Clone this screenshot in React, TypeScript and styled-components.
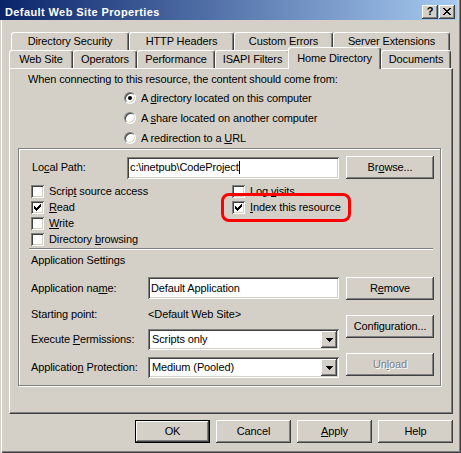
import styled, { createGlobalStyle, css } from "styled-components";

// ==================== Global ====================

const GlobalStyle = createGlobalStyle`
  * { box-sizing: border-box; }
  html, body { margin: 0; padding: 0; background: #d4d0c8; }
  body {
    font-family: "Liberation Sans", Arial, sans-serif;
    font-size: 11px;
    line-height: 13px;
    letter-spacing: -0.12px;
    color: #000;
  }
`;

// ==================== Bevels ====================

const raised = css`
  box-shadow: inset -1px -1px #404040, inset 1px 1px #ffffff,
    inset -2px -2px #808080, inset 2px 2px #d4d0c8;
`;

const sunken = css`
  box-shadow: inset 1px 1px #808080, inset -1px -1px #ffffff,
    inset 2px 2px #404040, inset -2px -2px #d4d0c8;
`;

// ==================== Window chrome ====================

const Window = styled.div`
  width: 461px;
  height: 453px;
  background: #d4d0c8;
  display: flex;
  flex-direction: column;
  box-shadow: inset 1px 0 #d4d0c8, inset 2px 0 #ffffff,
    inset -1px -1px #404040, inset -2px -2px #808080;
`;

const TitleBar = styled.div`
  flex: none;
  width: 457px;
  height: 20px;
  display: flex;
  align-items: flex-start;
  padding: 0 2px 0 5px;
  background: linear-gradient(to right, #0a246a, #a6caf0);
`;

const TitleText = styled.div`
  flex: 1;
  padding-top: 6px;
  color: #fff;
  font-weight: 700;
  letter-spacing: 0.4px;
  white-space: nowrap;
`;

const CaptionButtons = styled.div`
  display: flex;
  gap: 1px;
  margin-top: 5px;
`;

const CaptionButton = styled.div`
  width: 16px;
  height: 14px;
  background: #d4d0c8;
  ${raised};
  display: flex;
  align-items: center;
  justify-content: center;
  font-weight: 700;
  font-size: 11px;
  padding-bottom: 1px;
`;

const Body = styled.div`
  display: flex;
  flex-direction: column;
  padding-top: 12px;
`;

// ==================== Tabs ====================

const TabRow = styled.div<{ $indent: number }>`
  display: flex;
  align-items: flex-end;
  height: 18px;
  padding-left: ${({ $indent }) => $indent}px;
`;

const Tab = styled.div<{ $w: number; $active?: boolean }>`
  flex: none;
  width: ${({ $w }) => $w}px;
  height: ${({ $active }) => ($active ? 22 : 18)}px;
  margin: ${({ $active }) => ($active ? "0 0 -1px -2px" : "0")};
  background: #d4d0c8;
  border: 1px solid #404040;
  border-top-color: #fff;
  border-left-color: #fff;
  border-bottom: none;
  border-radius: 3px 3px 0 0;
  box-shadow: inset -1px 0 #808080;
  display: flex;
  justify-content: center;
  padding-top: ${({ $active }) => ($active ? 4 : 2)}px;
  white-space: nowrap;
  ${({ $active }) =>
    $active &&
    css`
      position: relative;
      z-index: 1;
    `}
`;

const Panel = styled.div`
  margin-left: 9px;
  width: 444px;
  height: 346px;
  border: 1px solid #404040;
  border-top-color: #fff;
  border-left-color: #fff;
  box-shadow: inset -1px -1px #808080;
  display: flex;
  flex-direction: column;
  padding: 0 9px 0 8px;
`;

const IntroText = styled.div`
  margin: 4px 0 0 10px;
  white-space: nowrap;
`;

// ==================== Radios / checks ====================

const RadioList = styled.div`
  margin: 2px 0 0 106px;
  display: flex;
  flex-direction: column;
`;

const OptionRow = styled.div<{ $h: number }>`
  display: flex;
  align-items: center;
  gap: 5px;
  height: ${({ $h }) => $h}px;
  white-space: nowrap;
`;

const RadioCircle = styled.span<{ $on?: boolean }>`
  flex: none;
  width: 12px;
  height: 12px;
  border-radius: 50%;
  background: #fff;
  border: 1px solid;
  border-color: #808080 #ffffff #ffffff #808080;
  box-shadow: inset 1px 1px #404040, inset -1px -1px #d4d0c8;
  display: flex;
  align-items: center;
  justify-content: center;

  &::after {
    content: "";
    width: 4px;
    height: 4px;
    border-radius: 50%;
    background: ${({ $on }) => ($on ? "#000" : "transparent")};
  }
`;

const CheckBox = styled.span`
  flex: none;
  width: 13px;
  height: 13px;
  background: #fff;
  ${sunken};

  svg {
    display: block;
  }
`;

const Key = styled.span`
  text-decoration: underline;
`;

const CHECK_COLS = [5, 6, 7, 6, 5, 4, 3];

function Check({ checked }: { checked?: boolean }) {
  return (
    <CheckBox>
      {checked && (
        <svg width="13" height="13" viewBox="0 0 13 13" shapeRendering="crispEdges">
          {CHECK_COLS.map((y, i) => (
            <rect key={i} x={3 + i} y={y} width="1" height="3" fill="#000" />
          ))}
        </svg>
      )}
    </CheckBox>
  );
}

// ==================== Group box ====================

const GroupBox = styled.div`
  position: relative;
  width: 423px;
  height: 238px;
  border: 1px solid #808080;
  box-shadow: inset 1px 1px #fff, 1px 1px #fff;
  padding: 7px 6px 0 12px;
  display: flex;
  flex-direction: column;
`;

const PathRow = styled.div`
  display: flex;
  align-items: center;
  height: 23px;
`;

const PathLabel = styled.div`
  width: 96px;
  padding-left: 1px;
`;

const TextField = styled.div<{ $w: number }>`
  width: ${({ $w }) => $w}px;
  height: 22px;
  background: #fff;
  ${sunken};
  display: flex;
  align-items: center;
  padding: 0 3px;
  white-space: nowrap;
`;

const Caret = styled.span`
  display: inline-block;
  width: 1px;
  height: 13px;
  background: #000;
  vertical-align: top;
`;

const CheckGrid = styled.div`
  margin-top: 4px;
  display: grid;
  grid-template-columns: 201px 1fr;
  grid-auto-rows: 16px;
`;

const Separator = styled.div`
  margin: 1px 0 0 -2px;
  width: 404px;
  height: 2px;
  border-top: 1px solid #808080;
  border-bottom: 1px solid #fff;
`;

const SectionTitle = styled.div`
  margin-top: 4px;
`;

const AppArea = styled.div`
  display: flex;
  align-items: flex-start;
  margin-top: 10px;
`;

const FieldGrid = styled.div`
  display: grid;
  grid-template-columns: 117px 191px;
  grid-template-rows: 22px 16px 21px 21px;
  row-gap: 7px;
  align-items: center;
  white-space: nowrap;
`;

const ButtonColumn = styled.div`
  margin-left: 7px;
  display: flex;
  flex-direction: column;
  gap: 15px;
`;

const SelectBox = styled.div`
  height: 21px;
  background: #fff;
  ${sunken};
  padding: 2px;
  display: flex;
`;

const SelectValue = styled.div`
  flex: 1;
  padding-left: 2px;
  line-height: 17px;
`;

const DropButton = styled.div`
  width: 16px;
  background: #d4d0c8;
  ${raised};
  display: flex;
  align-items: center;
  justify-content: center;
`;

const Annotation = styled.div`
  position: absolute;
  left: 202px;
  top: 44px;
  width: 130px;
  height: 29px;
  border: 3px solid #ff0000;
  border-radius: 8px;
  pointer-events: none;
`;

// ==================== Buttons ====================

const PushButton = styled.button<{ $w: number; $default?: boolean }>`
  flex: none;
  width: ${({ $w }) => $w}px;
  height: 23px;
  margin: 0;
  padding: 0;
  border: ${({ $default }) => ($default ? "1px solid #000" : "none")};
  background: #d4d0c8;
  font: inherit;
  letter-spacing: inherit;
  color: #000;
  ${raised};

  &:disabled {
    color: #808080;
    text-shadow: 1px 1px #fff;
  }
`;

const Footer = styled.div`
  display: flex;
  justify-content: flex-end;
  gap: 6px;
  padding-right: 8px;
  margin-top: 6px;
`;

// ==================== Data ====================

const TOP_TABS: [string, number][] = [
  ["Directory Security", 118],
  ["HTTP Headers", 105],
  ["Custom Errors", 99],
  ["Server Extensions", 117],
];

const BOTTOM_TABS: [string, number, boolean?][] = [
  ["Web Site", 64],
  ["Operators", 64],
  ["Performance", 78],
  ["ISAPI Filters", 75],
  ["Home Directory", 93, true],
  ["Documents", 70],
];

function Select({ value }: { value: string }) {
  return (
    <SelectBox>
      <SelectValue>{value}</SelectValue>
      <DropButton>
        <svg width="7" height="4" viewBox="0 0 7 4" shapeRendering="crispEdges">
          <path d="M0 0h7v1h-1v1h-1v1h-1v1h-1v-1h-1v-1h-1v-1h-1z" fill="#000" />
        </svg>
      </DropButton>
    </SelectBox>
  );
}

// ==================== Component ====================

export default function App() {
  return (
    <>
      <GlobalStyle />
      <Window>
        <TitleBar>
          <TitleText>Default Web Site Properties</TitleText>
          <CaptionButtons>
            <CaptionButton>?</CaptionButton>
            <CaptionButton>
              <svg width="8" height="7" viewBox="0 0 8 7" shapeRendering="crispEdges">
                <path
                  d="M0 0h2v1h1v1h2v-1h1v-1h2v1h-1v1h-1v1h-1v1h1v1h1v1h1v1h-2v-1h-1v-1h-2v1h-1v1h-2v-1h1v-1h1v-1h1v-1h-1v-1h-1z"
                  fill="#000"
                />
              </svg>
            </CaptionButton>
          </CaptionButtons>
        </TitleBar>

        <Body>
          <TabRow $indent={11}>
            {TOP_TABS.map(([label, w]) => (
              <Tab key={label} $w={w}>
                {label}
              </Tab>
            ))}
          </TabRow>
          <TabRow $indent={9}>
            {BOTTOM_TABS.map(([label, w, active]) => (
              <Tab key={label} $w={w} $active={active}>
                {label}
              </Tab>
            ))}
          </TabRow>

          <Panel>
            <IntroText>When connecting to this resource, the content should come from:</IntroText>
            <RadioList>
              <OptionRow $h={20}>
                <RadioCircle $on />
                <span>
                  A <Key>d</Key>irectory located on this computer
                </span>
              </OptionRow>
              <OptionRow $h={20}>
                <RadioCircle />
                <span>
                  A <Key>s</Key>hare located on another computer
                </span>
              </OptionRow>
              <OptionRow $h={20}>
                <RadioCircle />
                <span>
                  A redirection to a <Key>U</Key>RL
                </span>
              </OptionRow>
            </RadioList>

            <GroupBox>
              <PathRow>
                <PathLabel>
                  Lo<Key>c</Key>al Path:
                </PathLabel>
                <TextField $w={212}>
                  c:\inetpub\CodeProject
                  <Caret />
                </TextField>
                <PushButton $w={88} style={{ marginLeft: 7 }}>
                  Br<Key>o</Key>wse...
                </PushButton>
              </PathRow>

              <CheckGrid>
                <OptionRow $h={16}>
                  <Check />
                  <span>
                    Scrip<Key>t</Key> source access
                  </span>
                </OptionRow>
                <OptionRow $h={16}>
                  <Check />
                  <span>
                    Log <Key>v</Key>isits
                  </span>
                </OptionRow>
                <OptionRow $h={16}>
                  <Check checked />
                  <span>
                    <Key>R</Key>ead
                  </span>
                </OptionRow>
                <OptionRow $h={16}>
                  <Check checked />
                  <span>
                    <Key>I</Key>ndex this resource
                  </span>
                </OptionRow>
                <OptionRow $h={16}>
                  <Check />
                  <span>
                    <Key>W</Key>rite
                  </span>
                </OptionRow>
                <span />
                <OptionRow $h={16}>
                  <Check />
                  <span>
                    Directory <Key>b</Key>rowsing
                  </span>
                </OptionRow>
              </CheckGrid>

              <Separator />
              <SectionTitle>Application Settings</SectionTitle>

              <AppArea>
                <FieldGrid>
                  <span>
                    Application na<Key>m</Key>e:
                  </span>
                  <TextField $w={191}>Default Application</TextField>
                  <span>Starting point:</span>
                  <span>&lt;Default Web Site&gt;</span>
                  <span>
                    Execute <Key>P</Key>ermissions:
                  </span>
                  <Select value="Scripts only" />
                  <span>
                    Applicatio<Key>n</Key> Protection:
                  </span>
                  <Select value="Medium (Pooled)" />
                </FieldGrid>
                <ButtonColumn>
                  <PushButton $w={88}>
                    R<Key>e</Key>move
                  </PushButton>
                  <PushButton $w={88}>Configuration...</PushButton>
                  <PushButton $w={88} disabled>
                    Un<Key>l</Key>oad
                  </PushButton>
                </ButtonColumn>
              </AppArea>

              <Annotation />
            </GroupBox>
          </Panel>

          <Footer>
            <PushButton $w={75} $default>
              OK
            </PushButton>
            <PushButton $w={75}>Cancel</PushButton>
            <PushButton $w={75}>
              <Key>A</Key>pply
            </PushButton>
            <PushButton $w={75}>Help</PushButton>
          </Footer>
        </Body>
      </Window>
    </>
  );
}
